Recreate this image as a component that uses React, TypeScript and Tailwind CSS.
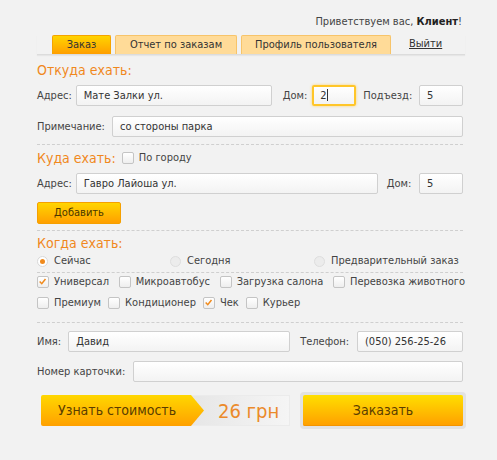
import { ReactNode } from "react";

const Field = ({ value, className = "", focused = false }: { value?: string; className?: string; focused?: boolean }) => {
  return (
    <div
      className={
        "h-[21px] shrink-0 rounded-[2px] bg-linear-to-b from-white to-[#f3f3f3] text-[11px] text-[#333] whitespace-nowrap " +
        (focused
          ? "border-2 border-[#ffc629] shadow-[0_0_3px_#ffd36b] leading-[17px] px-[6px]"
          : "border border-[#d0d0d0] leading-[19px] px-[7px]") +
        " " +
        className
      }
    >
      {value}
      {focused && <span className="inline-block w-px h-[12px] bg-[#333] align-[-2px]" />}
    </div>
  );
};

const Label = ({ children, className = "" }: { children: ReactNode; className?: string }) => (
  <span className={"text-[11px] leading-[14px] text-[#444] whitespace-nowrap " + className}>{children}</span>
);

const Heading = ({ children }: { children: ReactNode }) => (
  <h2 className="text-[14px] leading-[16px] text-[#f0881d]">{children}</h2>
);

const Dots = ({ className = "" }: { className?: string }) => (
  <div className={"border-t border-dashed border-[#cfcfcf] " + className} />
);

const Check = ({ checked = false }: { checked?: boolean }) => (
  <span className="relative inline-block w-[12px] h-[12px] shrink-0 rounded-[2px] border border-[#c4c4c4] bg-linear-to-b from-white to-[#eeeeee]">
    {checked && (
      <svg viewBox="0 0 12 12" className="absolute left-0 top-0 w-[10px] h-[10px]">
        <path d="M2 5.5 L4.5 8 L9 2.5" fill="none" stroke="#f08a1c" strokeWidth="1.8" />
      </svg>
    )}
  </span>
);

const CheckItem = ({ label, checked }: { label: string; checked?: boolean }) => (
  <label className="flex items-center gap-[5px] h-[14px] text-[11px] text-[#444] whitespace-nowrap">
    <Check checked={checked} />
    {label}
  </label>
);

const Radio = ({ label, checked = false }: { label: string; checked?: boolean }) => (
  <label className="flex items-center gap-[6px] h-[14px] text-[11px] text-[#444] whitespace-nowrap">
    <span
      className={
        "flex items-center justify-center w-[11px] h-[11px] rounded-full border " +
        (checked ? "border-[#d8d8d8] bg-white" : "border-[#dedede] bg-[#ececec]")
      }
    >
      {checked && <span className="w-[5px] h-[5px] rounded-full bg-[#f08a1c]" />}
    </span>
    {label}
  </label>
);

const Tab = ({ children, active = false, className = "" }: { children: ReactNode; active?: boolean; className?: string }) => (
  <div
    className={
      "h-[19px] flex items-center justify-center rounded-t-[2px] border border-b-0 text-[11px] text-[#333] whitespace-nowrap " +
      (active
        ? "bg-linear-to-b from-[#ffd400] to-[#ff9e00] border-[#f5a400]"
        : "bg-[#ffdb98] border-[#f7c46a]") +
      " " +
      className
    }
  >
    {children}
  </div>
);

export default function App() {
  return (
    <div className="w-[497px] h-[460px] bg-[#f2f2f2] font-['DejaVu_Sans_Condensed','DejaVu_Sans',Verdana,sans-serif] overflow-hidden">
      <div className="pt-[15px] pr-[35px] text-right text-[11px] leading-[14px] text-[#444]">
        Приветствуем вас, <b className="text-[#222]">Клиент</b>!
      </div>

      {/* tabs */}
      <div className="mt-[6px] ml-[37px] w-[428px] flex items-end border-b border-[#dcdcdc] shadow-[0_1px_1px_#e6e6e6]">
        <Tab active className="ml-[15px] w-[59px]">Заказ</Tab>
        <Tab className="ml-[4px] w-[122px]">Отчет по заказам</Tab>
        <Tab className="ml-[4px] w-[150px]">Профиль пользователя</Tab>
        <a className="ml-[18px] mb-[3px] text-[11px] leading-[14px] text-[#333] underline">Выйти</a>
      </div>

      <div className="ml-[37px] w-[426px]">
        <div className="mt-[7px]">
          <Heading>Откуда ехать:</Heading>
        </div>
        <div className="mt-[7px] flex items-center">
          <Label>Адрес:</Label>
          <Field value="Мате Залки ул." className="ml-[4px] w-[196px]" />
          <Label className="ml-[11px]">Дом:</Label>
          <Field value="2" focused className="ml-[5px] w-[44px]" />
          <Label className="ml-[7px]">Подъезд:</Label>
          <Field value="5" className="ml-auto w-[44px]" />
        </div>
        <div className="mt-[10px] flex items-center">
          <Label>Примечание:</Label>
          <Field value="со стороны парка" className="ml-[7px] flex-1" />
        </div>
        <Dots className="mt-[7px]" />

        <div className="mt-[5px] flex items-center">
          <Heading>Куда ехать:</Heading>
          <span className="ml-[6px]">
            <CheckItem label="По городу" />
          </span>
        </div>
        <div className="mt-[7px] flex items-center">
          <Label>Адрес:</Label>
          <Field value="Гавро Лайоша ул." className="ml-[4px] w-[302px]" />
          <Label className="ml-[9px]">Дом:</Label>
          <Field value="5" className="ml-auto w-[44px]" />
        </div>
        <button className="block mt-[8px] w-[84px] h-[22px] rounded-[2px] border border-[#f5a000] bg-linear-to-b from-[#ffd500] to-[#ff9f00] text-[11px] text-[#4a3500]">
          Добавить
        </button>
        <Dots className="mt-[6px]" />

        <div className="mt-[4px]">
          <Heading>Когда ехать:</Heading>
        </div>
        <div className="mt-[3px] flex items-center">
          <div className="w-[133px]">
            <Radio label="Сейчас" checked />
          </div>
          <div className="w-[144px]">
            <Radio label="Сегодня" />
          </div>
          <Radio label="Предварительный заказ" />
        </div>
        <Dots className="mt-[4px]" />
        <div className="mt-[2px] flex items-center justify-between w-[428px]">
          <CheckItem label="Универсал" checked />
          <CheckItem label="Микроавтобус" />
          <CheckItem label="Загрузка салона" />
          <CheckItem label="Перевозка животного" />
        </div>
        <div className="mt-[7px] flex items-center gap-[7px]">
          <CheckItem label="Премиум" />
          <CheckItem label="Кондиционер" />
          <CheckItem label="Чек" checked />
          <CheckItem label="Курьер" />
        </div>
        <Dots className="mt-[12px]" />

        <div className="mt-[8px] flex items-center">
          <Label>Имя:</Label>
          <Field value="Давид" className="ml-[7px] w-[222px]" />
          <Label className="ml-[10px]">Телефон:</Label>
          <Field value="(050) 256-25-26" className="ml-auto w-[106px]" />
        </div>
        <div className="mt-[9px] flex items-center">
          <Label>Номер карточки:</Label>
          <Field className="ml-[8px] flex-1" />
        </div>

        {/* price + order */}
        <div className="mt-[10px] flex items-center">
          <div className="ml-[4px] flex items-stretch h-[31px]">
            <div className="relative z-10 flex items-center">
              <div className="h-[31px] w-[150px] pl-[17px] flex items-center rounded-l-[2px] bg-linear-to-b from-[#ffd700] to-[#ffa000] text-[14px] text-[#5a3d00] whitespace-nowrap">
                Узнать стоимость
              </div>
              <svg viewBox="0 0 14 31" className="w-[14px] h-[31px] -ml-px" preserveAspectRatio="none">
                <defs>
                  <linearGradient id="arrowFill" x1="0" y1="0" x2="0" y2="1">
                    <stop offset="0" stopColor="#ffd700" />
                    <stop offset="1" stopColor="#ffa000" />
                  </linearGradient>
                </defs>
                <path d="M0 0 L1 0 L14 15.5 L1 31 L0 31 Z" fill="url(#arrowFill)" />
              </svg>
            </div>
            <div className="-ml-[14px] w-[100px] h-[31px] pl-[28px] flex items-center border border-l-0 border-[#ebebeb] bg-linear-to-r from-[#e6e6e6] to-[#f5f5f5] text-[20px] text-[#eb8a2a] whitespace-nowrap">
              26 грн
            </div>
          </div>
          <div className="ml-[10px] p-[3px] rounded-[4px] bg-[#e2e2e2]">
            <button className="block w-[160px] h-[31px] rounded-[2px] bg-linear-to-b from-[#ffdf00] to-[#ff9e00] shadow-[inset_0_-1px_0_#f39400] text-[14px] text-[#5a3d00]">
              Заказать
            </button>
          </div>
        </div>
      </div>
    </div>
  );
}
